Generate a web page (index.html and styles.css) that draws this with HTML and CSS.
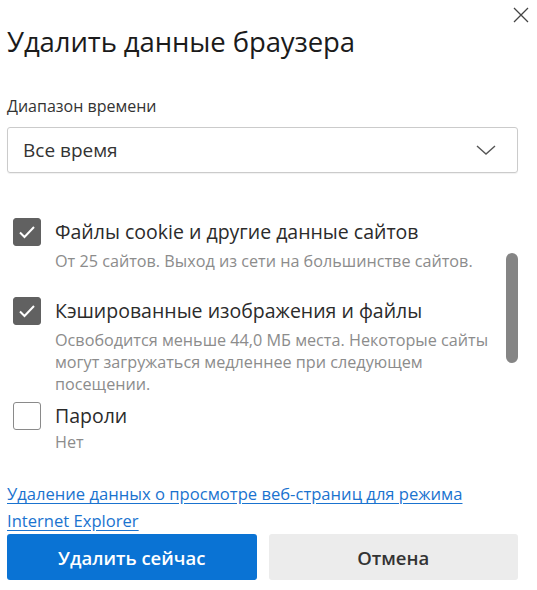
FILE: index.html
```html
<!DOCTYPE html>
<html lang="ru">
<head>
<meta charset="utf-8">
<title>Удалить данные браузера</title>
<link rel="stylesheet" href="styles.css">
</head>
<body>
<div class="dialog">
  <button class="close" aria-label="Закрыть">
    <svg width="16" height="16" viewBox="0 0 16 16"><path d="M1 1 L15 15 M15 1 L1 15" stroke="#444" stroke-width="1.3" fill="none"/></svg>
  </button>
  <h1 class="title">Удалить данные браузера</h1>
  <div class="field-label">Диапазон времени</div>
  <div class="select">
    <span class="select-value">Все время</span>
    <svg class="chevron" width="20" height="10" viewBox="0 0 20 10"><path d="M1 1 L10 9 L19 1" stroke="#555" stroke-width="1.4" fill="none"/></svg>
  </div>
  <div class="list">
    <div class="items">
      <div class="item item-first">
        <div class="row">
          <span class="cb checked"><svg width="18" height="14" viewBox="0 0 18 14"><path d="M2 7.5 L6.5 12 L16 2" stroke="#fff" stroke-width="2" fill="none"/></svg></span>
          <span class="label">Файлы cookie и другие данные сайтов</span>
        </div>
        <div class="desc">От 25 сайтов. Выход из сети на большинстве сайтов.</div>
      </div>
      <div class="item item-second">
        <div class="row">
          <span class="cb checked"><svg width="18" height="14" viewBox="0 0 18 14"><path d="M2 7.5 L6.5 12 L16 2" stroke="#fff" stroke-width="2" fill="none"/></svg></span>
          <span class="label">Кэшированные изображения и файлы</span>
        </div>
        <div class="desc">Освободится меньше 44,0 МБ места. Некоторые сайты могут загружаться медленнее при следующем посещении.</div>
      </div>
      <div class="item item-third">
        <div class="row">
          <span class="cb"></span>
          <span class="label">Пароли</span>
        </div>
        <div class="desc desc-tight">Нет</div>
      </div>
    </div>
    <div class="track"><div class="thumb"></div></div>
  </div>
  <a class="link" href="#">Удаление данных о просмотре веб-страниц для режима Internet Explorer</a>
  <div class="buttons">
    <button class="btn primary">Удалить сейчас</button>
    <button class="btn secondary">Отмена</button>
  </div>
</div>
</body>
</html>
```
FILE: styles.css
```css
html, body {
  margin: 0;
  padding: 0;
  background: #ffffff;
}
body {
  font-family: "Open Sans", "Noto Sans", sans-serif;
  color: #222;
}
.dialog {
  position: relative;
  width: 511px;
  padding: 26px 0 0 7px;
  display: flex;
  flex-direction: column;
}
.close {
  position: absolute;
  top: 7px;
  left: 513px;
  width: 16px;
  height: 16px;
  padding: 0;
  border: 0;
  background: none;
  display: flex;
}
.title {
  margin: 0;
  font-size: 27.5px;
  line-height: 32px;
  font-weight: 400;
  color: #1b1b1b;
  letter-spacing: -0.1px;
}
.field-label {
  margin-top: 38px;
  font-size: 16px;
  line-height: 20px;
  color: #333;
}
.select {
  margin-top: 11px;
  height: 44px;
  border: 1px solid #cbcbcb;
  border-radius: 3px;
  display: flex;
  align-items: center;
  justify-content: space-between;
  padding: 0 21px 0 15px;
  box-shadow: 0 1px 1px rgba(0,0,0,0.06);
}
.select-value {
  font-size: 19px;
  color: #333;
}
.list {
  margin-top: 45px;
  display: grid;
  grid-template-columns: 1fr 12px;
  column-gap: 6px;
}
.items {
  display: flex;
  flex-direction: column;
}
.item-second { margin-top: 25px; }
.item-third { margin-top: 7px; }
.row {
  display: flex;
  align-items: center;
  gap: 14px;
  padding-left: 6px;
  height: 28px;
}
.cb {
  width: 28px;
  height: 28px;
  box-sizing: border-box;
  border: 1.5px solid #8a8a8a;
  border-radius: 3px;
  background: #fff;
  display: flex;
  align-items: center;
  justify-content: center;
  flex: none;
}
.cb.checked {
  background: #616161;
  border-color: #616161;
}
.label {
  font-size: 19.5px;
  line-height: 28px;
  color: #2b2b2b;
}
.desc {
  margin-top: 4px;
  padding-left: 48px;
  font-size: 16.2px;
  line-height: 22px;
  color: #8c8c8c;
}
.desc-tight { margin-top: 1px; }
.track {
  display: flex;
  flex-direction: column;
}
.thumb {
  margin-top: 35px;
  height: 110px;
  width: 12px;
  border-radius: 6px;
  background: #858585;
}
.link {
  margin-top: 27px;
  font-size: 16.6px;
  line-height: 27px;
  color: #1a73cf;
  text-decoration: underline;
  text-underline-offset: 3px;
}
.buttons {
  margin-top: 0;
  display: grid;
  grid-template-columns: 1fr 1fr;
  column-gap: 12px;
}
.btn {
  height: 46px;
  border: 0;
  border-radius: 3px;
  font-family: inherit;
  font-size: 18.5px;
  font-weight: 600;
}
.primary {
  background: #0a73d4;
  color: #fff;
}
.secondary {
  background: #ececec;
  color: #333;
}
```
